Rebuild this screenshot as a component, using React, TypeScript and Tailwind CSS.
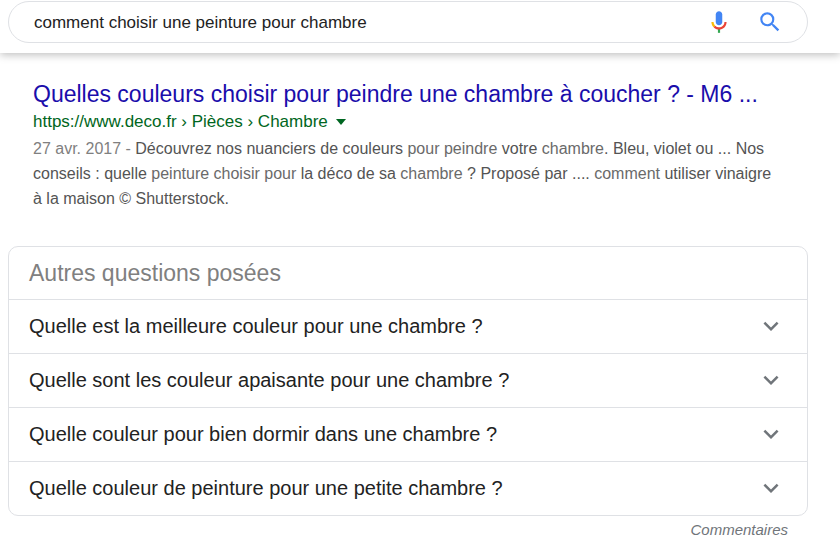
import React, { useState } from 'react';

const questions = [
    'Quelle est la meilleure couleur pour une chambre ?',
    'Quelle sont les couleur apaisante pour une chambre ?',
    'Quelle couleur pour bien dormir dans une chambre ?',
    'Quelle couleur de peinture pour une petite chambre ?',
];

const MicIcon: React.FC = () => (
    <svg className="w-[26px] h-[26px]" viewBox="0 0 24 24" aria-hidden="true">
        <path fill="#4285f4" d="M12 15c1.66 0 3-1.31 3-2.97V4.97C15 3.31 13.66 2 12 2S9 3.31 9 4.97v7.06C9 13.69 10.34 15 12 15z" />
        <path fill="#34a853" d="M11 18.08h2V22h-2z" />
        <path fill="#fbbc05" d="M7.05 16.87C5.77 15.6 5 13.93 5 12H7c0 1.45.56 2.42 1.47 3.38z" />
        <path fill="#ea4335" d="M12 16.93a4.97 5.25 0 0 1-3.54-1.55l-1.41 1.49C8.31 18.14 9.99 19 12 19c4.02 0 7-2.99 7-7h-2c0 2.92-2.24 4.93-5 4.93z" />
    </svg>
);

const SearchIcon: React.FC = () => (
    <svg className="w-[26px] h-[26px]" viewBox="0 0 24 24" fill="#4285f4" aria-hidden="true">
        <path d="M15.5 14h-.79l-.28-.27A6.471 6.471 0 0 0 16 9.5 6.5 6.5 0 1 0 9.5 16c1.61 0 3.09-.59 4.23-1.57l.27.28v.79l5 4.99L20.49 19l-4.99-5zm-6 0C7.01 14 5 11.99 5 9.5S7.01 5 9.5 5 14 7.01 14 9.5 11.99 14 9.5 14z" />
    </svg>
);

const ChevronIcon: React.FC = () => (
    <svg className="w-[30px] h-[30px] shrink-0" viewBox="0 0 24 24" fill="#70757a" aria-hidden="true">
        <path d="M16.59 8.59L12 13.17 7.41 8.59 6 10l6 6 6-6z" />
    </svg>
);

const Em: React.FC<{ children: React.ReactNode }> = ({ children }) => (
    <em className="not-italic text-[#6a6a6a]">{children}</em>
);

const SearchHeader: React.FC = () => {
    const [query, setQuery] = useState('comment choisir une peinture pour chambre');

    return (
        <header className="pl-2 pr-8 pt-px pb-2.5 bg-white shadow-[0_2px_8px_rgba(0,0,0,0.25)]">
            <form
                role="search"
                onSubmit={e => e.preventDefault()}
                className="flex items-center h-[42px] pl-[25px] pr-6 rounded-full border border-[#dfe1e5]"
            >
                <input
                    type="text"
                    aria-label="Rechercher"
                    value={query}
                    onChange={e => setQuery(e.target.value)}
                    className="flex-1 min-w-0 pt-0.5 text-[17px] text-[#222] bg-transparent outline-none"
                />
                <button type="button" aria-label="Recherche vocale" className="mr-[25px]">
                    <MicIcon />
                </button>
                <button type="submit" aria-label="Recherche Google">
                    <SearchIcon />
                </button>
            </form>
        </header>
    );
};

const SearchResult: React.FC = () => (
    <article className="pl-[33px] pr-15 pt-[25px]">
        <h3 className="text-[23px] leading-8 text-[#1a0dab]">
            <a href="#resultat">Quelles couleurs choisir pour peindre une chambre à coucher ? - M6 ...</a>
        </h3>
        <div className="flex items-center gap-2 text-[17px] leading-6 text-[#006621]">
            <cite className="not-italic">https://www.deco.fr › Pièces › Chambre</cite>
            <button type="button" aria-label="Options du résultat">
                <svg className="w-2.5 h-1.5" viewBox="0 0 10 6" fill="currentColor" aria-hidden="true">
                    <path d="M0 0h10L5 6z" />
                </svg>
            </button>
        </div>
        <p className="mt-0.5 text-base leading-[25px] text-[#545454]">
            <span className="text-[#808080]">27 avr. 2017 - </span>
            Découvrez nos nuanciers de couleurs <Em>pour peindre</Em> votre <Em>chambre</Em>. Bleu, violet ou ... Nos
            conseils : quelle <Em>peinture choisir pour</Em> la déco de sa <Em>chambre</Em> ? Proposé par
            .... <Em>comment</Em> utiliser vinaigre à la maison © Shutterstock.
        </p>
    </article>
);

const RelatedQuestions: React.FC = () => {
    const [open, setOpen] = useState<number | null>(null);

    return (
        <section className="pl-2 pr-8 mt-[35px]">
            <div className="rounded-[10px] border border-[#dfe1e5]">
                <h2 className="px-5 py-2.5 text-[23px] leading-8 text-[#808080]">Autres questions posées</h2>
                {questions.map((question, i) => (
                    <button
                        key={question}
                        type="button"
                        aria-expanded={open === i}
                        onClick={() => setOpen(open === i ? null : i)}
                        className="flex items-center justify-between w-full min-h-[54px] pt-2 pb-2.5 pl-5 pr-[21px] border-t border-[#dfe1e5] text-xl text-left text-[#222]"
                    >
                        {question}
                        <ChevronIcon />
                    </button>
                ))}
            </div>
            <div className="pr-5 pt-0.5 text-right">
                <a href="#commentaires" className="text-[15px] leading-6 italic text-[#70757a]">Commentaires</a>
            </div>
        </section>
    );
};

export default function App() {
    return (
        <main className="bg-white font-['Liberation_Sans',Arial,sans-serif]">
            <SearchHeader />
            <SearchResult />
            <RelatedQuestions />
        </main>
    );
}
